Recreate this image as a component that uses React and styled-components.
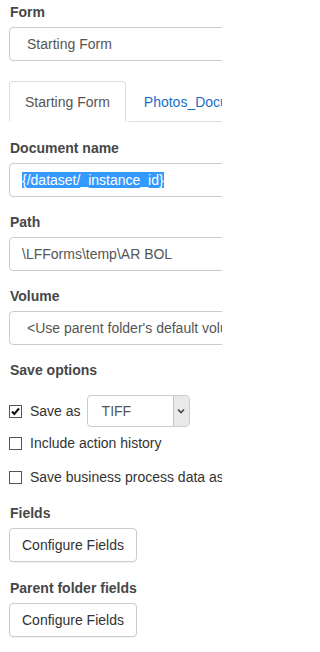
import styled, { createGlobalStyle } from "styled-components";

const GlobalStyle = createGlobalStyle`
    * { box-sizing: border-box; }
    html, body {
        margin: 0;
        padding: 0;
        background: #fff;
        overflow: hidden;
    }
    body {
        font-family: "Liberation Sans", Arial, sans-serif;
        font-size: 14px;
        line-height: 20px;
        color: #333;
    }
`

function Checkbox({ checked }) {
    return (
        <Box>
            {checked && (
                <svg width="11" height="11" viewBox="0 0 11 11">
                    <path d="M2 5.5 L4.3 8 L9 2.5" fill="none" stroke="#111" strokeWidth="2" />
                </svg>
            )}
        </Box>
    );
}

function App() {
    return (
        <Page>
            <GlobalStyle />
            <Content>
                <Group>
                    <Label>Form</Label>
                    <SelectBox>Starting Form</SelectBox>
                </Group>

                <Tabs>
                    <Tab active>Starting Form</Tab>
                    <Tab>Photos_Documents</Tab>
                    <TabRest />
                </Tabs>

                <TabBody>
                    <Group>
                        <Label>Document name</Label>
                        <TextBox>
                            <Selected>{"{/dataset/_instance_id}"}</Selected>
                        </TextBox>
                    </Group>
                    <Group>
                        <Label>Path</Label>
                        <TextBox>\LFForms\temp\AR BOL</TextBox>
                    </Group>
                    <Group>
                        <Label>Volume</Label>
                        <SelectBox>&lt;Use parent folder's default volume&gt;</SelectBox>
                    </Group>

                    <Label>Save options</Label>
                    <CheckRow top={15} height={32}>
                        <Checkbox checked />
                        <span>Save as</span>
                        <SmallSelect>
                            <SmallValue>TIFF</SmallValue>
                            <Arrow>
                                <svg width="8" height="6" viewBox="0 0 8 6">
                                    <path d="M1 1.5 L4 4.5 L7 1.5" fill="none" stroke="#444" strokeWidth="1.6" />
                                </svg>
                            </Arrow>
                        </SmallSelect>
                    </CheckRow>
                    <CheckRow top={6} height={20}>
                        <Checkbox />
                        <span>Include action history</span>
                    </CheckRow>
                    <CheckRow top={14} height={20}>
                        <Checkbox />
                        <span>Save business process data as metadata</span>
                    </CheckRow>

                    <Group top={16}>
                        <Label>Fields</Label>
                        <Button>Configure Fields</Button>
                    </Group>
                    <Group top={16}>
                        <Label>Parent folder fields</Label>
                        <Button>Configure Fields</Button>
                    </Group>
                </TabBody>
            </Content>
        </Page>
    );
}

const Page = styled.div`
    width: 222px;
    height: 652px;
    overflow: hidden;
`

const Content = styled.div`
    width: 340px;
    padding: 2px 0 0 9px;
`

const Group = styled.div`
    margin-top: ${props => props.top || 0}px;
    margin-bottom: 15px;
`

const Label = styled.div`
    font-weight: 700;
    color: #474747;
    padding-left: 1px;
    margin-bottom: 5px;
    white-space: nowrap;
`

const Field = styled.div`
    height: 34px;
    border: 1px solid #ccc;
    border-radius: 4px;
    display: flex;
    align-items: center;
    color: #555;
    white-space: nowrap;
    overflow: hidden;
`

const SelectBox = styled(Field)`
    padding-left: 17px;
`

const TextBox = styled(Field)`
    padding-left: 12px;
`

const Selected = styled.span`
    background: #3399ff;
    color: #fff;
    line-height: 16px;
`

const Tabs = styled.div`
    display: flex;
    margin-top: 20px;
    height: 41px;
`

const Tab = styled.div`
    padding: 10px 15px;
    margin-right: 2px;
    white-space: nowrap;
    color: ${props => props.active ? "#555" : "#1a6fc6"};
    background: #fff;
    border: 1px solid ${props => props.active ? "#ddd" : "transparent"};
    border-bottom-color: ${props => props.active ? "transparent" : "#ddd"};
    border-radius: 4px 4px 0 0;
`

const TabRest = styled.div`
    flex: 1;
    border-bottom: 1px solid #ddd;
`

const TabBody = styled.div`
    padding-top: 16px;
`

const CheckRow = styled.div`
    display: flex;
    align-items: center;
    height: ${props => props.height}px;
    margin-top: ${props => props.top}px;
    white-space: nowrap;
    color: #333;
`

const Box = styled.div`
    width: 13px;
    height: 13px;
    flex: none;
    margin-right: 8px;
    border: 1px solid #555;
    background: #fff;
    display: flex;
    align-items: center;
    justify-content: center;
`

const SmallSelect = styled.div`
    width: 103px;
    height: 32px;
    margin-left: 6px;
    border: 1px solid #ccc;
    border-radius: 4px;
    display: flex;
    overflow: hidden;
`

const SmallValue = styled.div`
    flex: 1;
    padding-left: 14px;
    display: flex;
    align-items: center;
    color: #555;
`

const Arrow = styled.div`
    width: 16px;
    background: #e9e9e9;
    border-left: 1px solid #c4c4c4;
    display: flex;
    align-items: center;
    justify-content: center;
`

const Button = styled.div`
    display: inline-flex;
    align-items: center;
    height: 34px;
    padding: 0 12px;
    border: 1px solid #ccc;
    border-radius: 4px;
    color: #333;
    background: #fff;
    box-shadow: 0 1px 1px rgba(0, 0, 0, 0.05);
`

export default App;
